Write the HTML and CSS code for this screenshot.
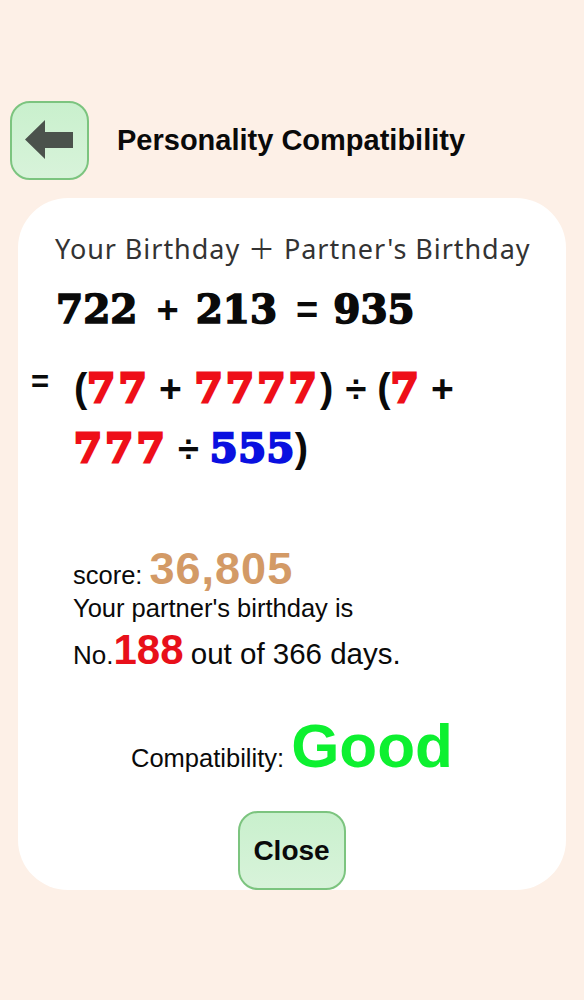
FILE: index.html
```html
<!DOCTYPE html>
<html lang="en">
<head>
<meta charset="utf-8">
<title>Personality Compatibility</title>
<link rel="stylesheet" href="styles.css">
</head>
<body>
<header class="header">
  <button class="btn back" aria-label="Back">
    <svg class="back-icon" width="48" height="39" viewBox="0 0 48 39"><path d="M0 19.5 L20 0 V12 H48 V28 H20 V39 Z" fill="#4b524c"/></svg>
  </button>
  <h1 class="title">Personality Compatibility</h1>
</header>
<main class="card">
  <p class="subtitle">Your Birthday ＋ Partner's Birthday</p>
  <p class="sum"><span class="fat">722</span><span class="op">+</span><span class="fat">213</span><span class="op op-eq">=</span><span class="fat">935</span></p>
  <div class="formula">
    <div class="eq">=</div>
    <div class="expr">
      <div class="line">(<span class="fat red">77</span><span class="op2">+</span><span class="fat red">7777</span>)<span class="op3">÷</span>(<span class="fat red">7</span><span class="op2">+</span></div>
      <div class="line"><span class="fat red">777</span><span class="op4">÷</span><span class="fat blue">555</span>)</div>
    </div>
  </div>
  <div class="result">
    <p class="score">score: <span class="score-num">36,805</span></p>
    <p class="rank-a">Your partner's birthday is</p>
    <p class="rank-b">No.<span class="rank-num">188</span> <span class="rank-rest">out of 366 days.</span></p>
  </div>
  <p class="compat">Compatibility: <span class="good">Good</span></p>
  <div class="actions"><button class="btn close">Close</button></div>
</main>
</body>
</html>
```
FILE: styles.css
```css
* { box-sizing: border-box; }
html, body { margin: 0; padding: 0; }
body {
  width: 584px;
  height: 1000px;
  background: #fdf0e7;
  font-family: "Liberation Sans", Arial, sans-serif;
  color: #0a0a0a;
  overflow: hidden;
  padding-top: 101px;
}
p, h1 { margin: 0; }
.btn {
  background: linear-gradient(#c9f0cd, #d8f3da);
  border: 2px solid #7cc47f;
  border-radius: 20px;
  font-family: inherit;
  color: #0a0a0a;
  padding: 0;
  display: flex;
  align-items: center;
  justify-content: center;
}
.header { display: flex; align-items: center; padding-left: 10px; height: 79px; }
.back { width: 79px; height: 79px; }
.back-icon { display: block; margin-right: 1px; margin-top: -2px; }
.title { font-size: 29px; font-weight: bold; margin-left: 28px; }
.card {
  margin: 18px 18px 0;
  width: 548px;
  height: 692px;
  background: #fff;
  border-radius: 50px;
  padding-top: 34px;
}
.subtitle {
  font-family: "Noto Sans", "Noto Sans CJK JP", sans-serif;
  font-weight: 400;
  font-size: 27px;
  letter-spacing: 0.95px;
  line-height: 34px;
  padding-left: 37px;
  color: #333;
  white-space: nowrap;
}
.fat {
  font-family: "DejaVu Serif", serif;
  font-weight: bold;
  -webkit-text-stroke: 1.6px currentColor;
}
.sum {
  padding-left: 38px;
  font-size: 39px;
  line-height: 50px;
  margin-top: 18px;
  white-space: nowrap;
  display: flex;
  align-items: baseline;
}
.op { font-family: "Liberation Sans", sans-serif; font-weight: bold; font-size: 38px; margin: 0 17px 0 19px; }
.op-eq { margin-right: 15px; }
.formula { display: flex; margin-top: 22px; }
.eq { width: 56px; padding-left: 13px; font-size: 31px; font-weight: bold; line-height: 56px; margin-top: -3px; }
.expr { font-size: 40px; font-weight: bold; line-height: 62px; }
.line { display: flex; align-items: baseline; white-space: nowrap; height: 60px; }
.red { color: #ee0f18; -webkit-text-stroke-width: 3px; letter-spacing: 3.5px; }
.blue { color: #0a10e0; -webkit-text-stroke-width: 2.4px; letter-spacing: 0.5px; }
.op2 { margin: 0 13px 0 9px; font-size: 39px; }
.op3 { margin: 0 11px 0 12px; font-size: 38px; }
.op4 { margin: 0 11px 0 10px; font-size: 38px; }
.result { padding-left: 55px; margin-top: 70px; }
.score { font-size: 25.5px; line-height: 44px; }
.score-num { font-size: 45px; font-weight: bold; color: #d39a66; letter-spacing: 1px; }
.rank-a { font-size: 25.5px; line-height: 30px; margin-top: -4px; }
.rank-b { font-size: 26px; line-height: 54px; }
.rank-rest { font-size: 29.5px; }
.rank-num { font-size: 42px; font-weight: bold; color: #e8101a; }
.compat { font-size: 25.5px; line-height: 70px; padding-left: 113px; margin-top: 29px; white-space: nowrap; }
.good { font-size: 62px; font-weight: bold; color: #0df030; }
.actions { display: flex; justify-content: center; margin-top: 18px; padding-right: 1px; }
.close { width: 108px; height: 79px; font-size: 28px; font-weight: bold; }
```
